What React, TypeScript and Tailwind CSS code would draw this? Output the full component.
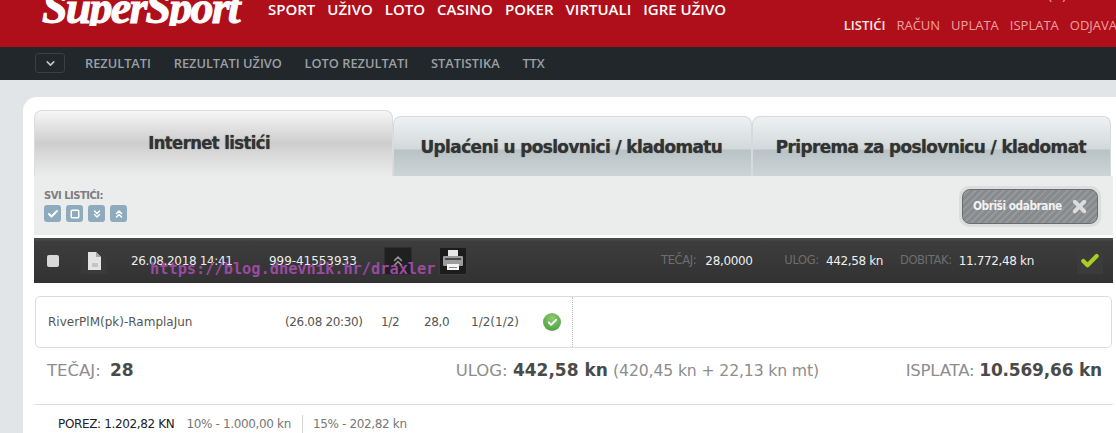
import React from 'react';
import { Check, ChevronDown, ChevronsDown, ChevronsUp, Square, X } from 'lucide-react';

const mainNav = ['SPORT', 'UŽIVO', 'LOTO', 'CASINO', 'POKER', 'VIRTUALI', 'IGRE UŽIVO'];
const userNav = ['RAČUN', 'UPLATA', 'ISPLATA', 'ODJAVA'];
const subNav = ['REZULTATI', 'REZULTATI UŽIVO', 'LOTO REZULTATI', 'STATISTIKA', 'TTX'];

const tahoma = "font-['DejaVu_Sans',sans-serif]";

function Tab({ label, active }: { label: string; active?: boolean }) {
  return (
    <div
      className={
        active
          ? "w-[359px] h-[66px] flex items-center justify-center pt-[1px] pr-[8px] rounded-t-lg border border-b-0 border-[#dcdcdc] bg-[linear-gradient(#f6f6f6_0%,#cdcdcd_50%,#d2d2d2_56%,#ebecec_100%)]"
          : "w-[359px] h-[60px] flex items-center justify-center pt-[2px] pr-[2px] rounded-t-lg border border-b-0 border-[#d5dadb] bg-[linear-gradient(#edf1f2_0%,#d3d9db_54%,#b9c3c6_56%,#ccd4d6_100%)]"
      }
    >
      <span className={`${tahoma} ${active ? 'text-[17px]' : 'text-[17.5px]'} font-bold tracking-[-0.6px] text-[#333] scale-x-[0.965] [text-shadow:0_0_1px_#555]`}>{label}</span>
    </div>
  );
}

function MiniButton({ children }: { children: React.ReactNode }) {
  return <div className="w-[17px] h-[17px] rounded-[3px] bg-[#8eabbd] flex items-center justify-center text-white">{children}</div>;
}

export default function App() {
  return (
    <div className="relative w-[1116px] h-[433px] overflow-hidden bg-[#e1e5e8] font-['Open_Sans',sans-serif]">
      {/* Red header */}
      <div className="h-[47px] bg-[#ae0f1b] overflow-hidden flex items-start pl-[42px]">
        <div className="w-[226px] h-[26px] overflow-hidden">
          <div className="-mt-[15px] font-['Liberation_Serif',serif] font-bold italic text-[46px] leading-[46px] tracking-[-1.8px] text-white [-webkit-text-stroke:1px_white]">SuperSport</div>
        </div>
        <nav className="flex gap-[12px] -mt-[1px] text-[15px] leading-[20px] font-semibold text-white">
          {mainNav.map(item => <span key={item}>{item}</span>)}
        </nav>
        <div className="ml-auto -mt-[12px] flex flex-col items-end">
          <span className="mr-[50px] h-[14px] text-[13px] leading-[14px] text-[#f3a0a0]">( &nbsp;&nbsp;)</span>
          <nav className="mt-[13px] mr-[-1px] flex gap-[11px] text-[13px] leading-[20px] text-[#f3a0a0]">
            <span className="font-semibold text-[#fde8e0]">LISTIĆI</span>
            {userNav.map(item => <span key={item}>{item}</span>)}
          </nav>
        </div>
      </div>

      {/* Dark sub nav */}
      <div className="h-[33px] bg-[#22272b] flex items-center pl-[35px]">
        <div className="w-[30px] h-[20px] mr-[20px] -mt-[1px] rounded-[3px] border border-[#3b4045] flex items-center justify-center text-[#c2c6ca]">
          <ChevronDown size={13} strokeWidth={3} />
        </div>
        <nav className="flex gap-[22.75px] text-[12.8px] font-semibold text-[#9aa0a5]">
          {subNav.map(item => <span key={item}>{item}</span>)}
        </nav>
      </div>

      {/* Card */}
      <div className="mt-[17px] ml-[23px] h-[340px] bg-white rounded-tl-[14px] pl-[11px] pr-[3px] pt-[13px]">
        <div className="flex items-end gap-0 h-[66px]">
          <Tab label="Internet listići" active />
          <Tab label="Uplaćeni u poslovnici / kladomatu" />
          <Tab label="Priprema za poslovnicu / kladomat" />
        </div>

        {/* Toolbar */}
        <div className="h-[59px] bg-[#ebecec] flex items-start justify-between pl-[10px] pr-[12px]">
          <div className="pt-[13px]">
            <div className={`${tahoma} text-[10px] leading-[13px] font-bold text-[#7d7d7d] tracking-[-0.5px] origin-left`}>SVI LISTIĆI:</div>
            <div className="flex gap-[5px] mt-[3px]">
              <MiniButton><Check size={12} strokeWidth={4} /></MiniButton>
              <MiniButton><Square size={10} strokeWidth={3.5} /></MiniButton>
              <MiniButton><ChevronsDown size={12} strokeWidth={3} /></MiniButton>
              <MiniButton><ChevronsUp size={12} strokeWidth={3} /></MiniButton>
            </div>
          </div>
          <div className="mt-[10px] w-[142px] h-[41px] rounded-[10px] bg-[#dcdddd] p-[3px]">
            <div className="h-full rounded-[8px] border border-[#6a6c6e] bg-[repeating-linear-gradient(135deg,#888b8e_0px,#888b8e_3px,#96999c_3px,#96999c_5px)] flex items-center justify-between pl-[10px] pr-[8px]">
              <span className={`${tahoma} text-[11.5px] font-bold tracking-[-0.5px] text-[#f2f2f2] scale-x-[0.92] origin-left whitespace-nowrap`}>Obriši odabrane</span>
              <X size={19} strokeWidth={5} className="text-[#dcdcdc] shrink-0" />
            </div>
          </div>
        </div>

        {/* Dark ticket row */}
        <div className="mt-[3px] h-[45px] bg-[linear-gradient(#4a4a4a_0px,#4a4a4a_2px,#3d3d3d_3px,#323232_100%)] flex items-center pl-[13px] text-[12px] text-[#ededed]">
          <div className="w-[12px] h-[12px] rounded-[2px] bg-[#d8d8d8]" />
          <div className="ml-[22px] w-[26px] h-[26px] bg-[#3a3a3a] flex items-center justify-center">
            <svg width="14" height="18" viewBox="0 0 14 18">
              <path d="M1 0h8l5 5v13H1z" fill="#e4e4e4" />
              <path d="M9 0v5h5z" fill="#a8a8a8" />
              <rect x="5" y="11" width="6" height="4" fill="#c4c4c4" />
            </svg>
          </div>
          <span className={`${tahoma} ml-[24px] w-[138px] tracking-[-0.35px]`}>26.08.2018 14:41</span>
          <span className={`${tahoma} w-[115px] tracking-[-0.05px]`}>999-41553933</span>
          <div className="w-[28px] h-[28px] bg-[#202020] border border-[#2e2e2e] flex items-center justify-center text-[#8f8f8f]">
            <ChevronsUp size={16} strokeWidth={2.5} />
          </div>
          <div className="ml-[27px] w-[28px] h-[28px] bg-[#1c1c1c] border border-[#3a3a3a] flex items-center justify-center">
            <svg width="24" height="24" viewBox="0 0 24 24">
              <rect x="7" y="1" width="10" height="6" fill="#e8e8e8" />
              <rect x="2" y="7" width="20" height="10" rx="1" fill="#9c9c9c" />
              <rect x="4" y="9" width="16" height="2" fill="#4a4a4a" />
              <rect x="6" y="15" width="12" height="6" fill="#f5f5f5" />
              <rect x="8" y="18" width="8" height="1" fill="#8a8a8a" />
            </svg>
          </div>
          <div className={`${tahoma} ml-[194px] flex text-[12px] tracking-[-0.35px]`}>
            <span className="text-[#6e6e6e] text-[11.5px]">TEČAJ:</span>
            <span className="ml-[9px] w-[79px] text-[#efefef]">28,0000</span>
            <span className="text-[#6e6e6e] text-[11.5px]">ULOG:</span>
            <span className="ml-[7px] w-[74px] text-[#efefef]">442,58 kn</span>
            <span className="text-[#6e6e6e] text-[11.5px]">DOBITAK:</span>
            <span className="ml-[7px] w-[119px] text-[#efefef]">11.772,48 kn</span>
          </div>
          <div className="w-[26px] h-[26px] -ml-[1px] bg-[#3b3b3b] flex items-center justify-center">
            <Check size={20} strokeWidth={5} className="text-[#a8cf1e]" />
          </div>
        </div>

        {/* Match */}
        <div className={`${tahoma} mt-[13px] ml-[1px] mr-[1px] h-[52px] rounded-[5px] border border-[#dcdcdc] flex items-center pl-[12px] text-[12px] text-[#555]`}>
          <span className="w-[237px]">RiverPlM(pk)-RamplaJun</span>
          <span className="w-[96px] tracking-[-0.35px]">(26.08 20:30)</span>
          <span className="w-[43px] tracking-[-0.35px]">1/2</span>
          <span className="w-[47px] tracking-[-0.35px]">28,0</span>
          <span className="w-[62px]">1/2(1/2)</span>
          <div className="ml-[10px] w-[18px] h-[18px] rounded-full bg-[radial-gradient(circle_at_50%_30%,#8fcb6c,#3f9a3c)] flex items-center justify-center text-white">
            <Check size={11} strokeWidth={4} />
          </div>
          <div className="ml-[11px] h-full py-[1px] border-l border-dotted border-[#bdbdbd]" />
        </div>

        {/* Totals */}
        <div className={`${tahoma} h-[56px] pb-[10px] flex items-center pl-[13px] pr-[11px] text-[16.5px] text-[#8d8d8d]`}>
          <span>TEČAJ: <b className="ml-[4px] text-[#4a4a4a] text-[17px]">28</b></span>
          <span className="ml-[322px]">ULOG: <b className="text-[#4a4a4a] text-[17px]">442,58 kn</b> <span className="text-[15.7px] -tracking-[0.15px]">(420,45 kn + 22,13 kn mt)</span></span>
          <span className="ml-auto tracking-[-0.2px]">ISPLATA: <b className="text-[#4a4a4a] text-[17px]">10.569,66 kn</b></span>
        </div>

        <div className={`${tahoma} border-t border-[#dedede] h-[29px] flex items-end pl-[24px] text-[12px] tracking-[-0.35px] text-[#777]`}>
          <span className="text-[#222]">POREZ: 1.202,82 KN</span>
          <span className="ml-[12px]">10% - 1.000,00 kn</span>
          <span className="ml-[11px] pl-[10px] border-l border-[#d5d5d5]">15% - 202,82 kn</span>
        </div>
      </div>

      {/* Watermark on top of the screenshot */}
      <span className="absolute left-[150px] top-[259px] font-['DejaVu_Sans_Mono',monospace] font-bold text-[15.3px] leading-[20px] text-[#9a4aa0]">https://blog.dnevnik.hr/draxler</span>
    </div>
  );
}
